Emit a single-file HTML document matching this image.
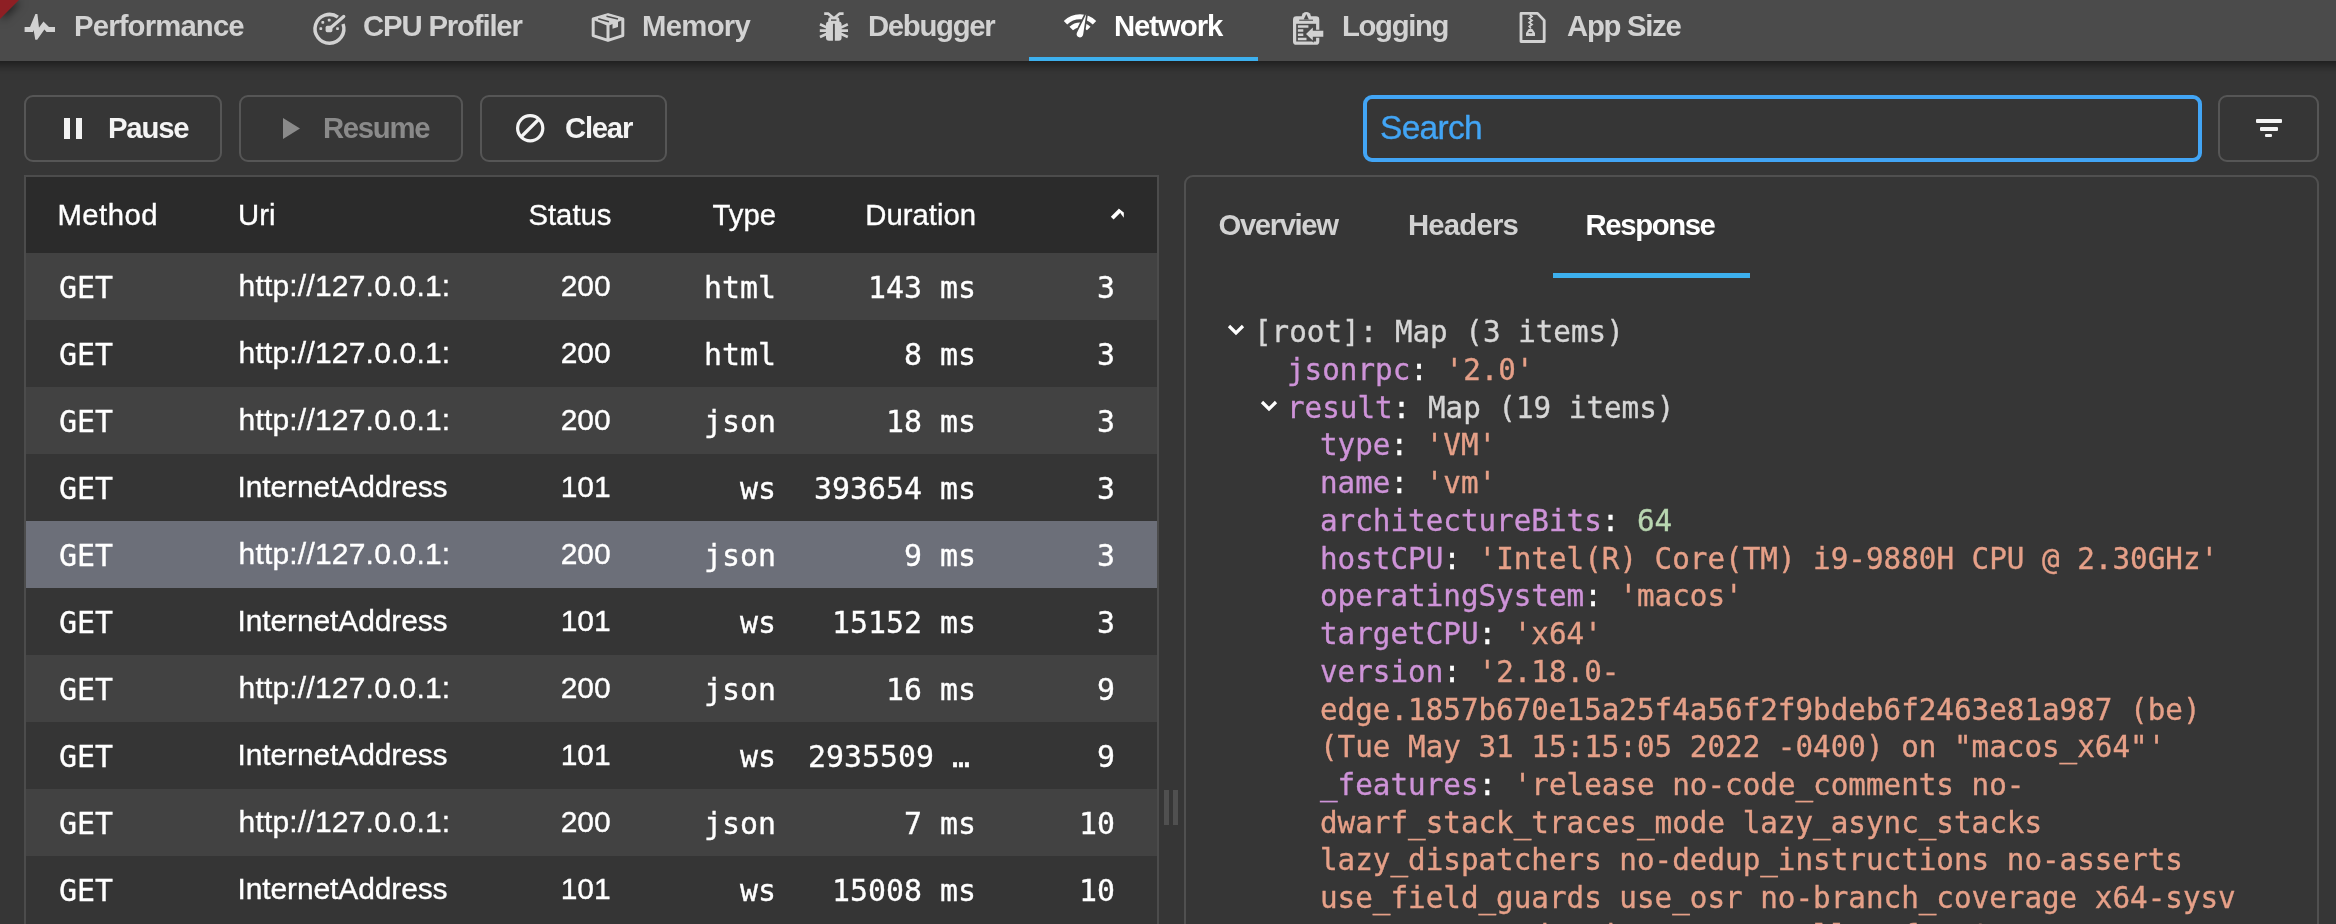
<!DOCTYPE html>
<html lang="en">
<head>
<meta charset="utf-8">
<title>DevTools - Network</title>
<style>
*{box-sizing:border-box;margin:0;padding:0}
html,body{width:2336px;height:924px;overflow:hidden;background:#363636}
body{position:relative;font-family:"Liberation Sans",sans-serif;color:#fff;font-size:29.3px}
.t{position:absolute;white-space:nowrap;line-height:40px;height:40px}
.m{font-family:"DejaVu Sans Mono","Liberation Mono",monospace}
#topbar{position:absolute;left:-30px;top:0;width:2400px;height:61px;background:#4b4b4b;box-shadow:0 2px 10px 2px rgba(0,0,0,.5)}
#dbg{position:absolute;left:0;top:0;width:0;height:0;border-top:19px solid #8e1f24;border-right:19px solid transparent;filter:drop-shadow(2px 2px 4px rgba(0,0,0,.55))}
.tab{font-weight:bold;color:#d2d2d2}
.tab.sel{color:#fff}
svg{position:absolute;overflow:visible}
#app{position:absolute;left:0;top:0;width:2336px;height:924px;overflow:hidden;will-change:transform}
.t,.ln{-webkit-text-stroke:0.35px currentColor}
.tab,.bt,.pt{-webkit-text-stroke:0}
.btn{position:absolute;top:95px;height:67px;border:2px solid #565656;border-radius:9px}
.bt{font-weight:bold}
#search{position:absolute;left:1363px;top:95px;width:839px;height:67px;border:4px solid #42a5f5;border-radius:9px}
#tbl{position:absolute;left:24px;top:175px;width:1134.5px;height:760px;border:2px solid #4c4c4c;background:#353535;overflow:hidden}
#thead{position:absolute;left:0;top:0;width:100%;height:76px;background:#2b2b2b}
.row{position:absolute;left:0;width:100%;height:67px;font-size:30px}
.row .m{font-size:29.9px}
.row.l{background:#424242}
.row.d{background:#353535}
.row.x{background:#6c6f79}
.r{text-align:right}
#panel{position:absolute;left:1183.5px;top:175px;width:1135.5px;height:780px;border:2px solid #505050;border-radius:9px}
.pt{font-weight:bold;color:#d2d2d2}
.ln{position:absolute;white-space:pre;height:38px;line-height:38px;font-family:"DejaVu Sans Mono","Liberation Mono",monospace;font-size:29.25px;left:0}
.k{color:#ce93d8}.s{color:#e6a088}.n{color:#b9d7b1}.g{color:#d6d6d6}
</style>
</head>
<body>
<div id="app">
<div id="topbar"></div><div id="dbg"></div>
<div class="t tab" style="left:74px;top:6px;letter-spacing:-0.85px;">Performance</div>
<div class="t tab" style="left:363px;top:6px;letter-spacing:-1.15px;">CPU Profiler</div>
<div class="t tab" style="left:642px;top:6px;letter-spacing:-0.7px;">Memory</div>
<div class="t tab" style="left:868px;top:6px;letter-spacing:-1.3px;">Debugger</div>
<div class="t tab sel" style="left:1114px;top:6px;letter-spacing:-1.05px;">Network</div>
<div class="t tab" style="left:1342px;top:6px;letter-spacing:-1.35px;">Logging</div>
<div class="t tab" style="left:1567px;top:6px;letter-spacing:-1.28px;">App Size</div>
<div style="position:absolute;left:1029px;top:57px;width:229px;height:4px;background:#3db0ee"></div>
<svg style="left:0;top:0" width="2336" height="64" viewBox="0 0 2336 64"><path d="M24.6 27H30L35.4 14h2L39 27.6 43.5 21.6 49 27h6v5h-8.4l-2.2-2.5L37.2 39.8h-1.9L33.6 30 33 32H24.6z" fill="#d2d2d2"/><path d="M337.9 17.2A14.4 14.4 0 1 0 343 24.0" fill="none" stroke="#d2d2d2" stroke-width="3.5" stroke-linecap="butt"/><path d="M329.5 28.7L343.7 16.4" stroke="#d2d2d2" stroke-width="3.3" stroke-linecap="round"/><rect x="325.6" y="25.8" width="6.8" height="6.4" rx="1.6" fill="#d2d2d2"/><rect x="319.40000000000003" y="27.200000000000003" width="2.8" height="2.8" rx="0.8" fill="#d2d2d2"/><rect x="321.40000000000003" y="21.0" width="2.8" height="2.8" rx="0.8" fill="#d2d2d2"/><rect x="327.8" y="18.8" width="2.8" height="2.8" rx="0.8" fill="#d2d2d2"/><rect x="336.1" y="27.200000000000003" width="2.8" height="2.8" rx="0.8" fill="#d2d2d2"/><path d="M593.2 19L608 14.7l14.800 4.300v16.600L608 40.400 593.200 35.600z M608 25v15.400" fill="none" stroke="#d2d2d2" stroke-width="3" stroke-linejoin="round"/><path d="M593 19L608 14.500l15 4.500L608 25z" fill="#d2d2d2" stroke="#d2d2d2" stroke-width="1.500" stroke-linejoin="round"/><path d="M598.2 18.700L609 21.700 M606.500 16.200L618 19.100" stroke="#4b4b4b" stroke-width="1.500"/><path d="M612.500 22.500l5.500-1.800v6.200l-5.500 1.800z" fill="#d2d2d2"/><path d="M824.2 13.700h4.200l5.500 4.800 5.500-4.800h4.200" fill="none" stroke="#d2d2d2" stroke-width="2.700" stroke-linejoin="round"/><path d="M828.2 22.500v-2.500q0-3 3-3h5.200q3 0 3 3v2.500z" fill="#d2d2d2"/><path d="M826 24.500q0-3 3-3h9.600q3 0 3 3v13.200q0 3-3 3h-9.600q-3 0-3-3z" fill="#d2d2d2"/><path d="M831 20.100h5.400" stroke="#4b4b4b" stroke-width="1.400"/><path d="M833.900 23.800v17.500" stroke="#4b4b4b" stroke-width="1.900"/><path d="M820 24.300l7 3.300 M819.800 30.700h7 M820 36.900l7-3.200 M847.800 24.300l-7 3.300 M848 30.700h-7 M847.800 36.900l-7-3.200" stroke="#d2d2d2" stroke-width="2.700"/><path d="M1065.50 22.80A20.5 20.5 0 0 1 1094.50 22.80" fill="none" stroke="#fff" stroke-width="4.900"/><path d="M1071.23 28.53A12.4 12.4 0 0 1 1088.77 28.53" fill="none" stroke="#fff" stroke-width="5"/><path d="M1086.200 14L1076.800 33a3.300 3.300 0 1 0 6.400 1.300z" fill="#fff" stroke="#4b4b4b" stroke-width="3.400" stroke-linejoin="round" paint-order="stroke"/><rect x="1294.600" y="17.900" width="23.100" height="25.300" rx="1.800" fill="none" stroke="#d2d2d2" stroke-width="3.200"/><rect x="1294" y="17" width="24.400" height="6.800" fill="#d2d2d2"/><circle cx="1306.300" cy="16.600" r="4.600" fill="#d2d2d2"/><path d="M1306.300 14l2.600 5.500h-5.200z" fill="#4b4b4b"/><path d="M1299.200 20.200h13.800" stroke="#4b4b4b" stroke-width="1.100"/><path d="M1297.900 26.600h10.500 M1297.900 30.600h5.400 M1297.900 34.700h5.400 M1297.900 38.900h8.600" stroke="#d2d2d2" stroke-width="2.500"/><path d="M1306 33.900l6.800-6.500v3.300h10.500v6h-10.500v3.700z" fill="#d2d2d2" stroke="#4b4b4b" stroke-width="2" paint-order="stroke"/><path d="M1521 13.400h16.500l6.700 7v21.100H1521z" fill="none" stroke="#d2d2d2" stroke-width="2.800" stroke-linejoin="round"/><path d="M1529.800 14.500l2.200 2-2.800 2 2.800 2-2.800 2 2.800 2-2.800 2 1.800 2" fill="none" stroke="#d2d2d2" stroke-width="1.700"/><path d="M1528.700 29h3.600l2.700 4v3h-9v-3z" fill="#d2d2d2"/><path d="M1528.600 32.600h3.600" stroke="#4b4b4b" stroke-width="1.300"/></svg>
<div class="btn" style="left:24px;width:198px"></div>
<div class="btn" style="left:239px;width:224px"></div>
<div class="btn" style="left:480px;width:187px"></div>
<div class="btn" style="left:2218px;width:101px"></div>
<div id="search"></div>
<div style="position:absolute;left:64px;top:118px;width:6px;height:21px;background:#f2f2f2"></div><div style="position:absolute;left:76px;top:118px;width:6px;height:21px;background:#f2f2f2"></div>
<div class="t bt" style="left:108px;top:108px;letter-spacing:-1.2px;color:#f4f4f4;">Pause</div>
<svg style="left:283px;top:118px" width="17" height="21" viewBox="0 0 17 21"><path d="M0 0l17 10.500L0 21z" fill="#8a8a8a"/></svg>
<div class="t bt" style="left:323px;top:108px;letter-spacing:-1.3px;color:#8a8a8a;">Resume</div>
<svg style="left:515px;top:113px" width="30" height="30" viewBox="0 0 30 30"><circle cx="15.2" cy="15.2" r="12.600" fill="none" stroke="#f4f4f4" stroke-width="3.200"/><path d="M6.500 23.500L23.500 6.500" stroke="#f4f4f4" stroke-width="3.200"/></svg>
<div class="t bt" style="left:565px;top:108px;letter-spacing:-1.25px;color:#f4f4f4;">Clear</div>
<div class="t " style="left:1380px;top:108px;letter-spacing:-0.7px;color:#42a5f5;font-size:33.5px;">Search</div>
<div style="position:absolute;left:2256px;top:119px;width:26px;height:4px;background:#f4f4f4;border-radius:1px"></div><div style="position:absolute;left:2260px;top:126.500px;width:18px;height:4px;background:#f4f4f4;border-radius:1px"></div><div style="position:absolute;left:2265px;top:133.500px;width:7px;height:3.500px;background:#f4f4f4;border-radius:1px"></div>
<div id="tbl"><div id="thead">
<div class="t " style="left:31.5px;top:18px;letter-spacing:0.45px;">Method</div>
<div class="t " style="left:212px;top:18px;">Uri</div>
<div class="t r" style="left:400px;top:18px;width:185.5px;">Status</div>
<div class="t r" style="left:600px;top:18px;width:150px;">Type</div>
<div class="t r" style="left:750px;top:18px;width:200px;">Duration</div>
<svg style="left:1084px;top:29.5px" width="18" height="14" viewBox="0 0 18 14"><path d="M2.200 11.200L10.200 3.200" stroke="#fff" stroke-width="4" stroke-linecap="butt"/><path d="M8.600 1.600l5.200 3.800v5.400l-3-4z" fill="#fff"/></svg>
</div>
<div class="row l" style="top:75.5px">
<div class="t m" style="left:33px;top:15.5px;">GET</div>
<div class="t " style="left:212.5px;top:13px;letter-spacing:0.2px;">http://127.0.0.1:</div>
<div class="t r" style="left:400px;top:13px;width:184.5px;letter-spacing:-0.1px;">200</div>
<div class="t m r" style="left:550px;top:15.5px;width:200px;">html</div>
<div class="t m r" style="left:700px;top:15.5px;width:250px;">143 ms</div>
<div class="t m r" style="left:950px;top:15.5px;width:139px;">3</div>
</div>
<div class="row d" style="top:142.5px">
<div class="t m" style="left:33px;top:15.5px;">GET</div>
<div class="t " style="left:212.5px;top:13px;letter-spacing:0.2px;">http://127.0.0.1:</div>
<div class="t r" style="left:400px;top:13px;width:184.5px;letter-spacing:-0.1px;">200</div>
<div class="t m r" style="left:550px;top:15.5px;width:200px;">html</div>
<div class="t m r" style="left:700px;top:15.5px;width:250px;">8 ms</div>
<div class="t m r" style="left:950px;top:15.5px;width:139px;">3</div>
</div>
<div class="row l" style="top:209.5px">
<div class="t m" style="left:33px;top:15.5px;">GET</div>
<div class="t " style="left:212.5px;top:13px;letter-spacing:0.2px;">http://127.0.0.1:</div>
<div class="t r" style="left:400px;top:13px;width:184.5px;letter-spacing:-0.1px;">200</div>
<div class="t m r" style="left:550px;top:15.5px;width:200px;">json</div>
<div class="t m r" style="left:700px;top:15.5px;width:250px;">18 ms</div>
<div class="t m r" style="left:950px;top:15.5px;width:139px;">3</div>
</div>
<div class="row d" style="top:276.5px">
<div class="t m" style="left:33px;top:15.5px;">GET</div>
<div class="t " style="left:211.6px;top:13px;letter-spacing:-0.13px;">InternetAddress</div>
<div class="t r" style="left:400px;top:13px;width:184.5px;letter-spacing:-0.1px;">101</div>
<div class="t m r" style="left:550px;top:15.5px;width:200px;">ws</div>
<div class="t m r" style="left:700px;top:15.5px;width:250px;">393654 ms</div>
<div class="t m r" style="left:950px;top:15.5px;width:139px;">3</div>
</div>
<div class="row x" style="top:343.5px">
<div class="t m" style="left:33px;top:15.5px;">GET</div>
<div class="t " style="left:212.5px;top:13px;letter-spacing:0.2px;">http://127.0.0.1:</div>
<div class="t r" style="left:400px;top:13px;width:184.5px;letter-spacing:-0.1px;">200</div>
<div class="t m r" style="left:550px;top:15.5px;width:200px;">json</div>
<div class="t m r" style="left:700px;top:15.5px;width:250px;">9 ms</div>
<div class="t m r" style="left:950px;top:15.5px;width:139px;">3</div>
</div>
<div class="row d" style="top:410.5px">
<div class="t m" style="left:33px;top:15.5px;">GET</div>
<div class="t " style="left:211.6px;top:13px;letter-spacing:-0.13px;">InternetAddress</div>
<div class="t r" style="left:400px;top:13px;width:184.5px;letter-spacing:-0.1px;">101</div>
<div class="t m r" style="left:550px;top:15.5px;width:200px;">ws</div>
<div class="t m r" style="left:700px;top:15.5px;width:250px;">15152 ms</div>
<div class="t m r" style="left:950px;top:15.5px;width:139px;">3</div>
</div>
<div class="row l" style="top:477.5px">
<div class="t m" style="left:33px;top:15.5px;">GET</div>
<div class="t " style="left:212.5px;top:13px;letter-spacing:0.2px;">http://127.0.0.1:</div>
<div class="t r" style="left:400px;top:13px;width:184.5px;letter-spacing:-0.1px;">200</div>
<div class="t m r" style="left:550px;top:15.5px;width:200px;">json</div>
<div class="t m r" style="left:700px;top:15.5px;width:250px;">16 ms</div>
<div class="t m r" style="left:950px;top:15.5px;width:139px;">9</div>
</div>
<div class="row d" style="top:544.5px">
<div class="t m" style="left:33px;top:15.5px;">GET</div>
<div class="t " style="left:211.6px;top:13px;letter-spacing:-0.13px;">InternetAddress</div>
<div class="t r" style="left:400px;top:13px;width:184.5px;letter-spacing:-0.1px;">101</div>
<div class="t m r" style="left:550px;top:15.5px;width:200px;">ws</div>
<div class="t m r" style="left:700px;top:15.5px;width:244px;">2935509 …</div>
<div class="t m r" style="left:950px;top:15.5px;width:139px;">9</div>
</div>
<div class="row l" style="top:611.5px">
<div class="t m" style="left:33px;top:15.5px;">GET</div>
<div class="t " style="left:212.5px;top:13px;letter-spacing:0.2px;">http://127.0.0.1:</div>
<div class="t r" style="left:400px;top:13px;width:184.5px;letter-spacing:-0.1px;">200</div>
<div class="t m r" style="left:550px;top:15.5px;width:200px;">json</div>
<div class="t m r" style="left:700px;top:15.5px;width:250px;">7 ms</div>
<div class="t m r" style="left:950px;top:15.5px;width:139px;">10</div>
</div>
<div class="row d" style="top:678.5px">
<div class="t m" style="left:33px;top:15.5px;">GET</div>
<div class="t " style="left:211.6px;top:13px;letter-spacing:-0.13px;">InternetAddress</div>
<div class="t r" style="left:400px;top:13px;width:184.5px;letter-spacing:-0.1px;">101</div>
<div class="t m r" style="left:550px;top:15.5px;width:200px;">ws</div>
<div class="t m r" style="left:700px;top:15.5px;width:250px;">15008 ms</div>
<div class="t m r" style="left:950px;top:15.5px;width:139px;">10</div>
</div>
</div>
<div style="position:absolute;left:1164.2px;top:790px;width:5.2px;height:35px;background:#505050"></div><div style="position:absolute;left:1172.5px;top:790px;width:5.2px;height:35px;background:#505050"></div>
<div id="panel"></div>
<div class="t pt" style="left:1218.5px;top:205px;letter-spacing:-1.4px;">Overview</div>
<div class="t pt" style="left:1408px;top:205px;letter-spacing:-0.8px;">Headers</div>
<div class="t pt" style="left:1585.6px;top:205px;letter-spacing:-1.4px;color:#fff;">Response</div>
<div style="position:absolute;left:1552.5px;top:273px;width:197.5px;height:4.5px;background:#3db0ee"></div>
<svg style="left:1227px;top:324px" width="18" height="12" viewBox="0 0 18 12"><path d="M2 2l7 7 7-7" fill="none" stroke="#fff" stroke-width="3.200"/></svg>
<svg style="left:1260px;top:400px" width="18" height="12" viewBox="0 0 18 12"><path d="M2 2l7 7 7-7" fill="none" stroke="#fff" stroke-width="3.200"/></svg>
<div class="ln" style="left:1254px;top:313.20px"><span class="g">[root]: Map (3 items)</span></div>
<div class="ln" style="left:1287px;top:350.93px"><span class="k">jsonrpc</span>: <span class="s">'2.0'</span></div>
<div class="ln" style="left:1287px;top:388.66px"><span class="k">result</span>: <span class="g">Map (19 items)</span></div>
<div class="ln" style="left:1320px;top:426.39px"><span class="k">type</span>: <span class="s">'VM'</span></div>
<div class="ln" style="left:1320px;top:464.12px"><span class="k">name</span>: <span class="s">'vm'</span></div>
<div class="ln" style="left:1320px;top:501.85px"><span class="k">architectureBits</span>: <span class="n">64</span></div>
<div class="ln" style="left:1320px;top:539.58px"><span class="k">hostCPU</span>: <span class="s">'Intel(R) Core(TM) i9-9880H CPU @ 2.30GHz'</span></div>
<div class="ln" style="left:1320px;top:577.31px"><span class="k">operatingSystem</span>: <span class="s">'macos'</span></div>
<div class="ln" style="left:1320px;top:615.04px"><span class="k">targetCPU</span>: <span class="s">'x64'</span></div>
<div class="ln" style="left:1320px;top:652.77px"><span class="k">version</span>: <span class="s">'2.18.0-</span></div>
<div class="ln" style="left:1320px;top:690.50px"><span class="s">edge.1857b670e15a25f4a56f2f9bdeb6f2463e81a987 (be)</span></div>
<div class="ln" style="left:1320px;top:728.23px"><span class="s">(Tue May 31 15:15:05 2022 -0400) on "macos_x64"'</span></div>
<div class="ln" style="left:1320px;top:765.96px"><span class="k">_features</span>: <span class="s">'release no-code_comments no-</span></div>
<div class="ln" style="left:1320px;top:803.69px"><span class="s">dwarf_stack_traces_mode lazy_async_stacks</span></div>
<div class="ln" style="left:1320px;top:841.42px"><span class="s">lazy_dispatchers no-dedup_instructions no-asserts</span></div>
<div class="ln" style="left:1320px;top:879.15px"><span class="s">use_field_guards use_osr no-branch_coverage x64-sysv</span></div>
<div class="ln" style="left:1320px;top:916.88px"><span class="s">no-compressed-pointers no-null-safety'</span></div>
</div>
</body>
</html>
